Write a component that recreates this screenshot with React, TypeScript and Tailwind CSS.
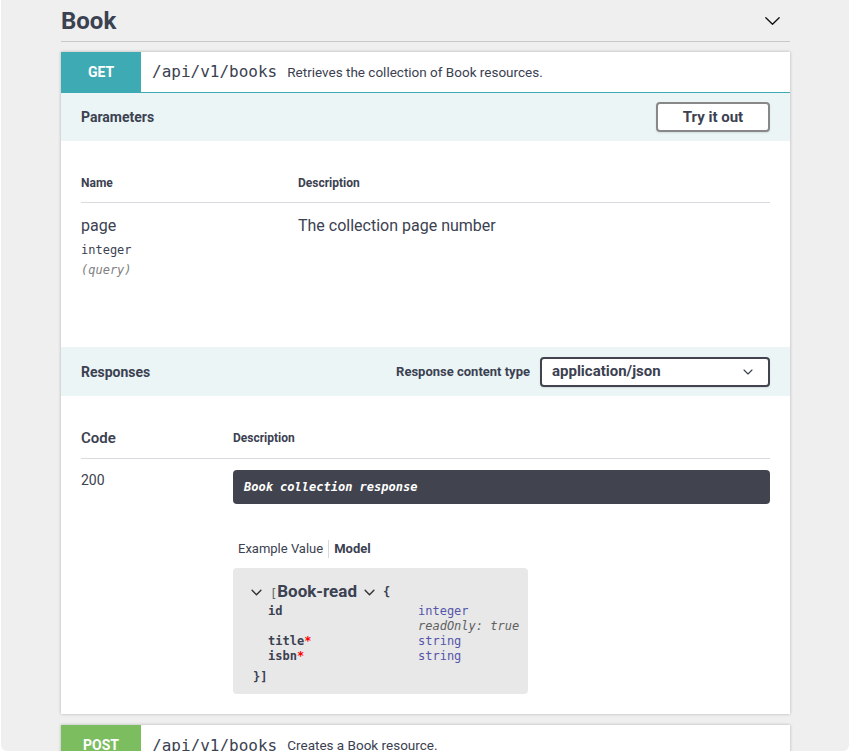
import React from "react";

const sans = { fontFamily: "Roboto, 'Noto Sans', sans-serif" };
const mono = { fontFamily: "'DejaVu Sans Mono', 'Liberation Mono', monospace" };

function Chevron({ className, stroke = 1.5 }: { className?: string; stroke?: number }) {
  return (
    <svg viewBox="0 0 20 12" className={className} fill="none" stroke="currentColor" strokeWidth={stroke} strokeLinecap="round" strokeLinejoin="round">
      <path d="M2 2 L10 10 L18 2" />
    </svg>
  );
}

export default function App() {
  return (
    <div className="w-full h-[752px] bg-white text-[#3b4151]" style={sans}>
      <div className="ml-[1px] mr-[2px] h-[751px] bg-[#efefef] rounded-b-[6px] overflow-hidden pl-[60px]">
        <div className="w-[729px]">
          {/* Heading */}
          <div className="h-[42px] flex items-center justify-between border-b border-[#c9c9c9]">
            <h2 className="text-[24px] font-bold leading-none text-[#3b4151]">Book</h2>
            <Chevron className="w-[17px] h-[10px] mr-[9px] text-[#111]" stroke={1.6} />
          </div>

          {/* GET block */}
          <div className="mt-[10px] bg-white shadow-[0_0_3px_rgba(0,0,0,0.25)]">
            <div className="h-[41px] flex items-stretch border-b border-[#3eaab4]">
              <div className="w-[80px] bg-[#3eaab4] text-white font-bold text-[14px] flex items-center justify-center">GET</div>
              <div className="flex items-center pl-[11px]">
                <span className="text-[16px] text-[#3b4151]" style={mono}>/api/v1/books</span>
                <span className="ml-[10px] text-[13.5px] text-[#3b4151]">Retrieves the collection of Book resources.</span>
              </div>
            </div>

            {/* Parameters header */}
            <div className="h-[48px] bg-[#ebf5f6] flex items-center justify-between px-[20px]">
              <span className="text-[14px] font-bold mt-[1px]">Parameters</span>
              <button className="w-[114px] h-[30px] border-2 border-[#888] rounded-[4px] bg-white text-[15px] font-bold text-[#3b4151] shadow-[0_1px_2px_rgba(0,0,0,0.1)]">Try it out</button>
            </div>

            {/* Parameters table */}
            <div className="h-[206px] px-[20px] pt-[22px]">
              <div className="h-[40px] flex items-center border-b border-[#d8dade] text-[12px] font-bold">
                <div className="w-[217px]">Name</div>
                <div>Description</div>
              </div>
              <div className="flex pt-[13px]">
                <div className="w-[217px] flex flex-col">
                  <span className="text-[16px] leading-[20px]">page</span>
                  <span className="text-[12px] leading-[20px] mt-[4px]" style={mono}>integer</span>
                  <span className="text-[12px] leading-[20px] italic text-[#808080]" style={mono}>(query)</span>
                </div>
                <div className="text-[16px] leading-[20px]">The collection page number</div>
              </div>
            </div>

            {/* Responses header */}
            <div className="h-[49px] bg-[#ebf5f6] flex items-center justify-between px-[20px]">
              <span className="text-[14px] font-bold mt-[1px]">Responses</span>
              <div className="flex items-center">
                <span className="text-[13px] font-bold mr-[10px]">Response content type</span>
                <div className="w-[230px] h-[30px] border-2 border-[#41444e] rounded-[4px] bg-white flex items-center justify-between pl-[10px] pr-[15px] shadow-[0_1px_2px_rgba(0,0,0,0.1)]">
                  <span className="text-[15px] font-bold">application/json</span>
                  <Chevron className="w-[10px] h-[6px] text-[#3b4151]" stroke={2.2} />
                </div>
              </div>
            </div>

            {/* Responses table */}
            <div className="px-[20px] pt-[22px] pb-[20px]">
              <div className="h-[41px] flex items-center border-b border-[#d8dade]">
                <div className="w-[152px] text-[15px] font-semibold">Code</div>
                <div className="text-[12px] font-bold">Description</div>
              </div>
              <div className="flex pt-[11px]">
                <div className="w-[152px] text-[14px] leading-[20px]">200</div>
                <div className="flex-1">
                  <div className="h-[34px] bg-[#41444e] rounded-[4px] flex items-center px-[11px] text-white text-[12px] font-bold italic" style={mono}>Book collection response</div>
                  <div className="mt-[36px] ml-[5px] flex items-center text-[13px] leading-[18px]">
                    <span className="text-[#3b4151] pr-[5px] border-r border-[#d8dade]">Example Value</span>
                    <span className="pl-[5px] font-bold">Model</span>
                  </div>
                  <div className="mt-[10px] w-[295px] h-[126px] bg-[#e8e8e8] rounded-[4px] pl-[18px] pt-[14px] text-[12px]" style={mono}>
                    <div className="flex items-center h-[20px]">
                      <Chevron className="w-[11px] h-[7px] text-[#333]" stroke={2.6} />
                      <span className="ml-[8px] text-[#666] text-[12px] mt-[3px]">[</span>
                      <span className="text-[17px] font-bold text-[#3b4151]" style={sans}>Book-read</span>
                      <Chevron className="ml-[7px] w-[11px] h-[7px] text-[#333]" stroke={2.6} />
                      <span className="ml-[8px] font-bold text-[#3b4151]">{"{"}</span>
                    </div>
                    <div className="pl-[17px] pt-[2px] font-bold leading-[15px] text-[#3b4151]">
                      <div className="flex"><span className="w-[150px]">id</span><span className="font-normal text-[#55a]">integer</span></div>
                      <div className="flex"><span className="w-[150px]"></span><span className="font-normal italic text-[#606060]">readOnly: true</span></div>
                      <div className="flex"><span className="w-[150px]">title<span className="text-[#f00]">*</span></span><span className="font-normal text-[#55a]">string</span></div>
                      <div className="flex"><span className="w-[150px]">isbn<span className="text-[#f00]">*</span></span><span className="font-normal text-[#55a]">string</span></div>
                    </div>
                    <div className="mt-[4px] pl-[2px] font-bold text-[#3b4151]">{"}]"}</div>
                  </div>
                </div>
              </div>
            </div>
          </div>

          {/* POST block */}
          <div className="mt-[11px] bg-white shadow-[0_0_3px_rgba(0,0,0,0.25)]">
            <div className="h-[41px] flex items-stretch">
              <div className="w-[80px] bg-[#7bbd5f] text-white font-bold text-[14px] flex items-center justify-center">POST</div>
              <div className="flex items-center pl-[11px]">
                <span className="text-[16px] text-[#3b4151]" style={mono}>/api/v1/books</span>
                <span className="ml-[10px] text-[13.5px] text-[#3b4151]">Creates a Book resource.</span>
              </div>
            </div>
          </div>
        </div>
      </div>
    </div>
  );
}
